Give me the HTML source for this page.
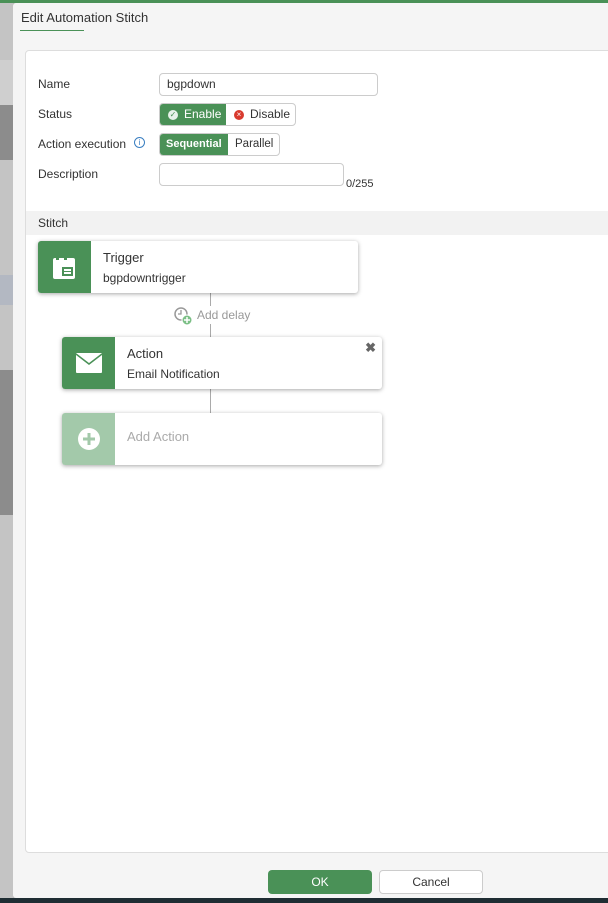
<!DOCTYPE html>
<html><head><style>
*{box-sizing:border-box;margin:0;padding:0}
body{width:608px;height:903px;overflow:hidden;position:relative;font-family:"Liberation Sans",sans-serif;font-size:12px;color:#333;background:#bbb}
.abs{position:absolute}
.lb{position:absolute;left:38px;font-size:12px;color:#333}
.card{position:absolute;background:#fff;border-radius:3px;box-shadow:0 1px 4px rgba(0,0,0,.35);overflow:hidden}
.ic{position:absolute;left:0;top:0;bottom:0;width:53px;background:#4a9157}
</style></head><body>
<!-- background strips -->
<div class="abs" style="left:0;top:0;width:13px;height:903px;background:#c4c4c4"></div>
<div class="abs" style="left:0;top:60px;width:13px;height:45px;background:#cfcfcf"></div>
<div class="abs" style="left:0;top:105px;width:13px;height:55px;background:#8c8c8c"></div>
<div class="abs" style="left:0;top:275px;width:13px;height:30px;background:#b3b8c2"></div>
<div class="abs" style="left:0;top:370px;width:13px;height:145px;background:#8c8c8c"></div>
<div class="abs" style="left:0;top:0;width:608px;height:3px;background:#4a9157"></div>
<div class="abs" style="left:0;top:898px;width:608px;height:5px;background:#1f2d33"></div>
<!-- dialog -->
<div class="abs" style="left:13px;top:3px;width:595px;height:895px;background:#f5f5f5;border-radius:3px 0 0 3px"></div>
<div class="abs" style="left:21px;top:10px;font-size:13px;color:#333">Edit Automation Stitch</div>
<div class="abs" style="left:20px;top:30px;width:64px;height:1px;background:#4a9157"></div>
<div class="abs" style="left:25px;top:50px;width:590px;height:803px;background:#fff;border:1px solid #ddd;border-radius:4px"></div>
<div class="lb" style="top:77px">Name</div>
<div class="abs" style="left:159px;top:73px;width:219px;height:23px;border:1px solid #ccc;border-radius:4px;padding:3px 7px;font-size:12px">bgpdown</div>
<div class="lb" style="top:107px">Status</div>
<div class="abs" style="left:159px;top:103px;width:137px;height:23px;border:1px solid #ccc;border-radius:4px;overflow:hidden">
 <div class="abs" style="left:0;top:0;width:66px;height:23px;background:#4a9157;color:#fff;padding:3px 0 0 24px">Enable</div>
 <div class="abs" style="left:8px;top:6px;width:10px;height:10px;border-radius:50%;background:#e8f2ea;color:#4a9157;font-size:8px;line-height:10px;text-align:center">✓</div>
 <div class="abs" style="left:74px;top:6px;width:10px;height:10px;border-radius:50%;background:#d83a2e;color:#fff;font-size:8px;line-height:10px;text-align:center">×</div>
 <div class="abs" style="left:90px;top:3px">Disable</div>
</div>
<div class="lb" style="top:137px">Action execution</div>
<div class="abs" style="left:134px;top:137px;width:11px;height:11px;border:1px solid #3a7fc1;border-radius:50%;color:#3a7fc1;font-size:8px;line-height:9px;text-align:center">i</div>
<div class="abs" style="left:159px;top:133px;width:121px;height:23px;border:1px solid #ccc;border-radius:4px;overflow:hidden">
 <div class="abs" style="left:0;top:0;width:68px;height:23px;background:#4a9157;color:#fff;padding:4px 0 0 6px;font-size:11px;font-weight:bold">Sequential</div>
 <div class="abs" style="left:75px;top:4px;font-size:11.5px">Parallel</div>
</div>
<div class="lb" style="top:167px">Description</div>
<div class="abs" style="left:159px;top:163px;width:185px;height:23px;border:1px solid #ccc;border-radius:4px"></div>
<div class="abs" style="left:346px;top:178px;font-size:11px">0/255</div>
<div class="abs" style="left:26px;top:211px;width:582px;height:24px;background:#f2f2f2"></div>
<div class="lb" style="top:216px">Stitch</div>
<!-- connectors -->
<div class="abs" style="left:210px;top:293px;width:1px;height:44px;background:#aaa"></div>
<div class="abs" style="left:210px;top:389px;width:1px;height:24px;background:#aaa"></div>
<div class="abs" style="left:172px;top:306px;width:240px;height:18px;background:#fff"></div>
<svg class="abs" style="left:173px;top:306px" width="20" height="20"><circle cx="8" cy="8" r="6" fill="none" stroke="#999" stroke-width="1.5"/><path d="M8 4v4h-3" stroke="#999" stroke-width="1.3" fill="none"/><circle cx="14" cy="14" r="5" fill="#7cbf86" stroke="#fff"/><path d="M14 11v6M11 14h6" stroke="#fff" stroke-width="1.5"/></svg>
<div class="abs" style="left:197px;top:308px;color:#999;font-size:12px">Add delay</div>
<!-- trigger -->
<div class="card" style="left:38px;top:241px;width:320px;height:52px"><div class="ic"></div>
<svg class="abs" style="left:14px;top:13px" width="26" height="26"><rect x="1" y="4" width="22" height="21" rx="2" fill="#fff"/><rect x="4" y="2" width="3" height="4" fill="#4a9157"/><rect x="12" y="2" width="3" height="4" fill="#4a9157"/><rect x="10" y="13" width="11" height="9" fill="#4a9157"/><rect x="12" y="15" width="7" height="2" fill="#fff"/><rect x="12" y="18" width="7" height="2" fill="#fff"/></svg>
<div class="abs" style="left:65px;top:9px;font-size:13px">Trigger</div>
<div class="abs" style="left:65px;top:30px;font-size:12px">bgpdowntrigger</div></div>
<!-- action -->
<div class="card" style="left:62px;top:337px;width:320px;height:52px"><div class="ic"></div>
<svg class="abs" style="left:13px;top:15px" width="28" height="22"><rect x="1" y="1" width="26" height="20" rx="1" fill="#fff"/><path d="M1 2l13 10 13-10" fill="none" stroke="#4a9157" stroke-width="1.5"/></svg>
<div class="abs" style="left:65px;top:9px;font-size:13px">Action</div>
<div class="abs" style="left:65px;top:30px;font-size:12px">Email Notification</div>
<div class="abs" style="right:6px;top:3px;font-size:13px;font-weight:bold;color:#666">✖</div></div>
<!-- add action -->
<div class="card" style="left:62px;top:413px;width:320px;height:52px"><div class="ic" style="background:#a3c9aa"></div>
<svg class="abs" style="left:15px;top:14px" width="24" height="24"><circle cx="12" cy="12" r="11" fill="#fff"/><path d="M12 6v12M6 12h12" stroke="#a3c9aa" stroke-width="3"/></svg>
<div class="abs" style="left:65px;top:16px;font-size:13px;color:#aaa">Add Action</div></div>
<!-- footer -->
<div class="abs" style="left:268px;top:870px;width:104px;height:24px;background:#4a9157;border-radius:4px;color:#fff;text-align:center;line-height:24px;font-size:12px">OK</div>
<div class="abs" style="left:379px;top:870px;width:104px;height:24px;background:#fff;border:1px solid #ccc;border-radius:4px;text-align:center;line-height:22px;font-size:12px">Cancel</div>
</body></html>
